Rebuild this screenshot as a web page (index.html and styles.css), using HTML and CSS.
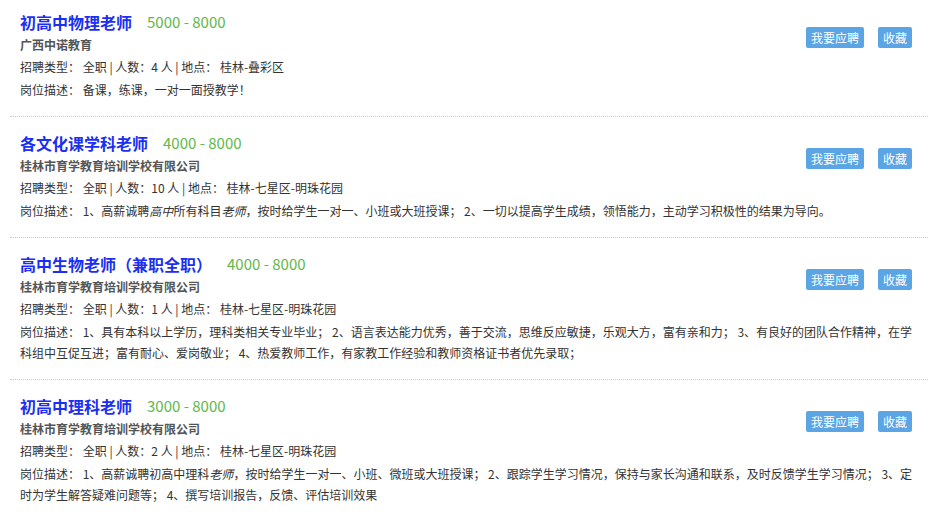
FILE: index.html
```html
<!DOCTYPE html>
<html lang="zh-CN">
<head>
    <meta charset="UTF-8">
    <title>招聘信息</title>
    <link rel="stylesheet" href="styles.css">
</head>
<body>

<ul class="job-list">
    <li class="job-item">
        <div class="job-head">
            <div class="job-info">
                <div class="job-title"><a href="#">初高中物理老师</a><span class="salary">5000 - 8000</span></div>
                <div class="company">广西中诺教育</div>
                <p>招聘类型： 全职 | 人数：4 人 | 地点： 桂林-叠彩区</p>
            </div>
            <div class="job-actions">
                <button type="button">我要应聘</button>
                <button type="button">收藏</button>
            </div>
        </div>
        <p class="job-desc">岗位描述： 备课，练课，一对一面授教学！</p>
    </li>
    <li class="job-item">
        <div class="job-head">
            <div class="job-info">
                <div class="job-title"><a href="#">各文化课学科老师</a><span class="salary">4000 - 8000</span></div>
                <div class="company">桂林市育学教育培训学校有限公司</div>
                <p>招聘类型： 全职 | 人数：10 人 | 地点： 桂林-七星区-明珠花园</p>
            </div>
            <div class="job-actions">
                <button type="button">我要应聘</button>
                <button type="button">收藏</button>
            </div>
        </div>
        <p class="job-desc">岗位描述： 1、高薪诚聘<i>高中</i>所有科目<i>老师</i>，按时给学生一对一、小班或大班授课； 2、一切以提高学生成绩，领悟能力，主动学习积极性的结果为导向。</p>
    </li>
    <li class="job-item">
        <div class="job-head">
            <div class="job-info">
                <div class="job-title"><a href="#">高中生物老师（兼职全职）</a><span class="salary">4000 - 8000</span></div>
                <div class="company">桂林市育学教育培训学校有限公司</div>
                <p>招聘类型： 全职 | 人数：1 人 | 地点： 桂林-七星区-明珠花园</p>
            </div>
            <div class="job-actions">
                <button type="button">我要应聘</button>
                <button type="button">收藏</button>
            </div>
        </div>
        <p class="job-desc">岗位描述： 1、具有本科以上学历，理科类相关专业毕业； 2、语言表达能力优秀，善于交流，思维反应敏捷，乐观大方，富有亲和力； 3、有良好的团队合作精神，在学科组中互促互进；富有耐心、爱岗敬业； 4、热爱教师工作，有家教工作经验和教师资格证书者优先录取；</p>
    </li>
    <li class="job-item">
        <div class="job-head">
            <div class="job-info">
                <div class="job-title"><a href="#">初高中理科老师</a><span class="salary">3000 - 8000</span></div>
                <div class="company">桂林市育学教育培训学校有限公司</div>
                <p>招聘类型： 全职 | 人数：2 人 | 地点： 桂林-七星区-明珠花园</p>
            </div>
            <div class="job-actions">
                <button type="button">我要应聘</button>
                <button type="button">收藏</button>
            </div>
        </div>
        <p class="job-desc">岗位描述： 1、高薪诚聘初高中理科<i>老师</i>，按时给学生一对一、小班、微班或大班授课； 2、跟踪学生学习情况，保持与家长沟通和联系，及时反馈学生学习情况； 3、定时为学生解答疑难问题等； 4、撰写培训报告，反馈、评估培训效果</p>
    </li>
</ul>

</body>
</html>
```

FILE: styles.css
```css
body {
    margin: 0;
    font-family: "Noto Sans CJK SC", "Liberation Sans", sans-serif;
    font-size: 12px;
    color: #333;
    background-color: #fff;
}
.job-list {
    list-style: none;
    margin: 0;
    padding: 0;
}
.job-item {
    margin: 0 10px 4px;
    padding: 10px 4px 16px 10px;
    border-bottom: 1px dotted #c8c8c8;
}
.job-item:last-child {
    border-bottom: none;
}
.job-head {
    display: flex;
    justify-content: space-between;
    align-items: flex-start;
}
.job-title {
    display: flex;
    align-items: center;
    height: 24px;
    line-height: 24px;
}
.job-title a {
    font-size: 16px;
    font-weight: bold;
    color: #1a2ff0;
    text-decoration: none;
}
.salary {
    margin-left: 15px;
    font-size: 15px;
    color: #62b84a;
}
.company {
    line-height: 22px;
    font-weight: bold;
    color: #555;
}
.job-item p {
    margin: 0;
    line-height: 22px;
}
.job-item .job-desc {
    line-height: 21px;
    margin-top: 1px;
}
.job-actions {
    display: flex;
    gap: 14px;
    margin-top: 17px;
    margin-right: 12px;
}
.job-actions button {
    height: 21px;
    padding: 0 5px;
    font-family: inherit;
    font-size: 12px;
    line-height: 21px;
    color: #fff;
    background-color: #5ba5e5;
    border: none;
    border-radius: 2px;
    cursor: pointer;
}
```
